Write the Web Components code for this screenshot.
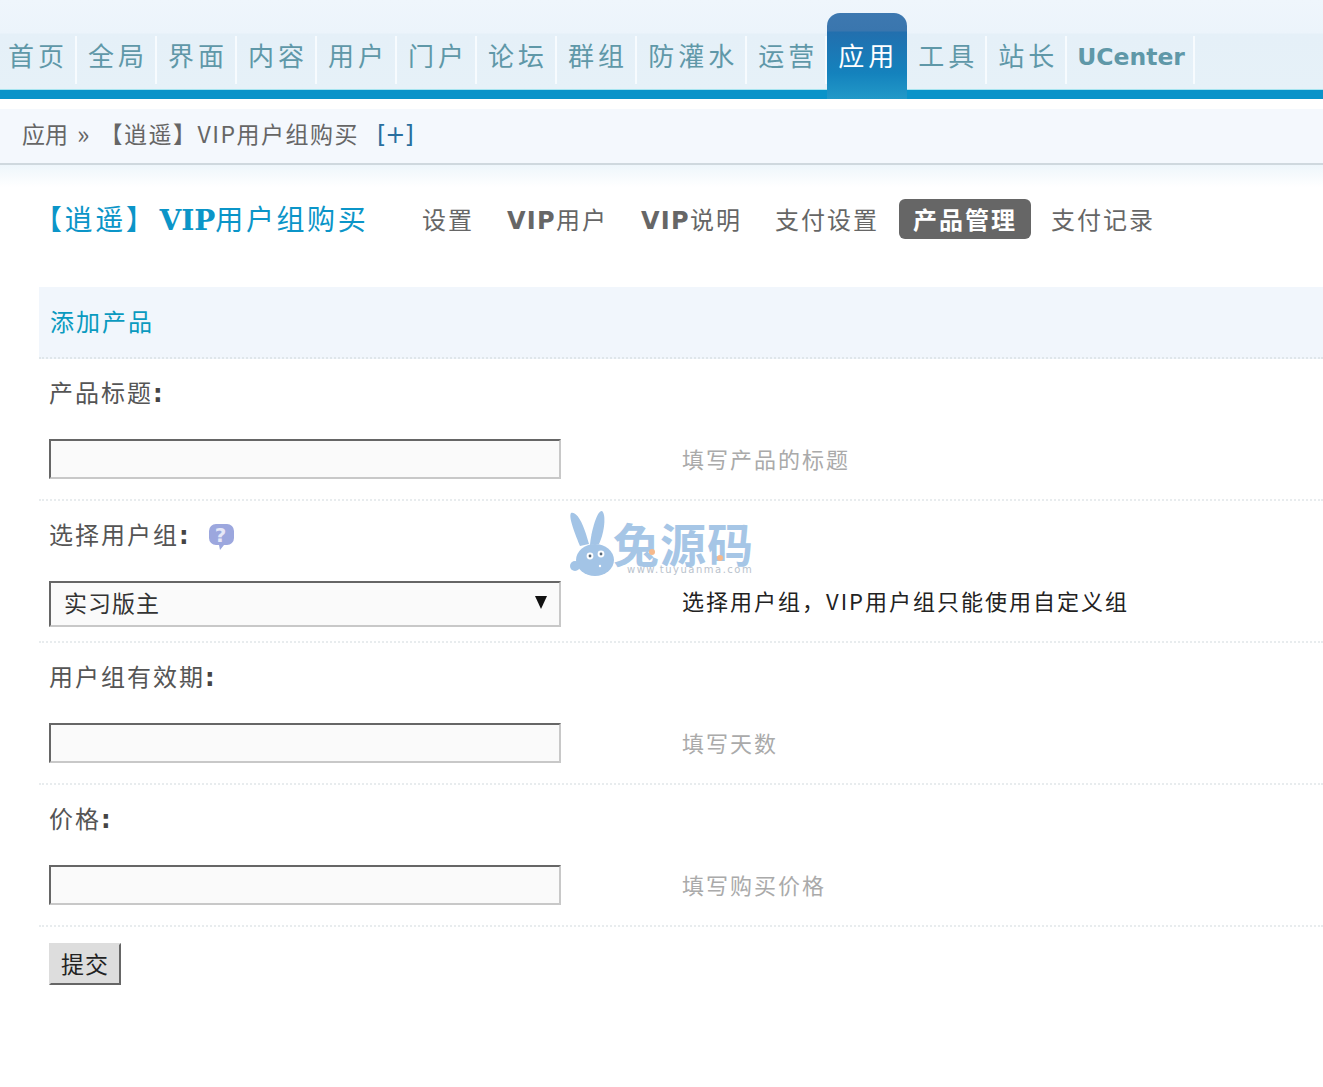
<!DOCTYPE html>
<html lang="zh">
<head>
<meta charset="utf-8">
<title>添加产品</title>
<style>
    html, body { margin: 0; background: #fff; }
    body {
        position: relative;
        height: 1087px;
        overflow: hidden;
        font-family: "Noto Sans CJK SC", "Liberation Sans", sans-serif;
    }
</style>
</head>
<body>
<top-nav>
    <nav-tab>首页</nav-tab><nav-tab>全局</nav-tab><nav-tab>界面</nav-tab><nav-tab>内容</nav-tab>
    <nav-tab>用户</nav-tab><nav-tab>门户</nav-tab><nav-tab>论坛</nav-tab><nav-tab>群组</nav-tab>
    <nav-tab>防灌水</nav-tab><nav-tab>运营</nav-tab><nav-tab active>应用</nav-tab><nav-tab>工具</nav-tab>
    <nav-tab>站长</nav-tab><nav-tab latin>UCenter</nav-tab>
</top-nav>
<crumb-bar></crumb-bar>
<plugin-head>
    <sub-link>设置</sub-link>
    <sub-link><b>VIP</b>用户</sub-link>
    <sub-link><b>VIP</b>说明</sub-link>
    <sub-link>支付设置</sub-link>
    <sub-link active>产品管理</sub-link>
    <sub-link>支付记录</sub-link>
</plugin-head>
<form-panel heading="添加产品">
    <form-row label="产品标题" tip="填写产品的标题"><text-box></text-box></form-row>
    <form-row label="选择用户组" tip="选择用户组，VIP用户组只能使用自定义组" help strong><select-box value="实习版主"></select-box></form-row>
    <form-row label="用户组有效期" tip="填写天数"><text-box></text-box></form-row>
    <form-row label="价格" tip="填写购买价格"><text-box></text-box></form-row>
    <submit-button>提交</submit-button>
</form-panel>
<water-mark></water-mark>

<script>
const CJK = `"Noto Sans CJK SC", "Liberation Sans", sans-serif`;

class TopNav extends HTMLElement {
    constructor() {
        super();
        this.attachShadow({ mode: "open" });
        this.shadowRoot.innerHTML = `
            <style>
                :host {
                    display: block;
                    height: 99px;
                    background: linear-gradient(#eff6fc 0, #ecf4fb 33px, #e5f0f8 34px, #e6f1f8 89px);
                    position: relative;
                }
                .tabs {
                    display: flex;
                    align-items: flex-end;
                    height: 99px;
                    margin-left: -3px;
                }
                .bar {
                    height: 10px;
                    margin-top: -10px;
                    background: #0a93c9;
                    border-top: 1px solid #a5e4f0;
                    box-sizing: border-box;
                }
            </style>
            <div class="tabs"><slot></slot></div>
            <div class="bar"></div>
        `;
    }
}
customElements.define("top-nav", TopNav);

class NavTab extends HTMLElement {
    constructor() {
        super();
        this.attachShadow({ mode: "open" });
        this.shadowRoot.innerHTML = `
            <style>
                :host {
                    display: block;
                    box-sizing: border-box;
                    height: 48px;
                    margin-bottom: 15px;
                    padding-left: 11px;
                    padding-right: 7px;
                    border-right: 2px solid #f7fbfe;
                    color: #5f98a8;
                    font: 26px/38px ${CJK};
                    letter-spacing: 4px;
                    white-space: nowrap;
                    position: relative;
                    z-index: 1;
                }
                :host([latin]) {
                    font: bold 23.5px/43px "DejaVu Sans", sans-serif;
                    letter-spacing: 0;
                    padding-left: 10px;
                    padding-right: 0;
                    width: 128px;
                }
                :host([active]) {
                    height: 86px;
                    margin-bottom: 0;
                    padding-top: 23px;
                    padding-right: 9px;
                    border-right: 0;
                    color: #fff;
                    border-radius: 13px 13px 0 0;
                    background: linear-gradient(#3d78b0 0, #3a76ae 18px, #226fae 19px, #1482bd 60px, #2299c8 86px);
                }
            </style>
            <slot></slot>
        `;
    }
}
customElements.define("nav-tab", NavTab);

class CrumbBar extends HTMLElement {
    constructor() {
        super();
        this.attachShadow({ mode: "open" });
        this.shadowRoot.innerHTML = `
            <style>
                :host {
                    display: block;
                    margin-top: 10px;
                    height: 56px;
                    box-sizing: border-box;
                    background: #f4f8fd;
                    border-bottom: 2px solid #cfd8de;
                }
                .row {
                    display: flex;
                    align-items: center;
                    height: 48px;
                    padding-left: 22px;
                    color: #666;
                    font: 23px/48px ${CJK};
                    white-space: nowrap;
                }
                .sep { margin: 0 11px 0 9px; font-size: 26px; }
                .name { margin-left: -1px; letter-spacing: 1.5px; }
                .more { margin: 4px 0 0 18px; color: #2a6f9f; font: 24px/48px "DejaVu Sans", sans-serif; letter-spacing: -1px; }
            </style>
            <div class="row">
                <span>应用</span><span class="sep">»</span>
                <span class="name">【逍遥】VIP用户组购买</span>
                <span class="more">[+]</span>
            </div>
        `;
    }
}
customElements.define("crumb-bar", CrumbBar);

class PluginHead extends HTMLElement {
    constructor() {
        super();
        this.attachShadow({ mode: "open" });
        this.shadowRoot.innerHTML = `
            <style>
                :host {
                    display: block;
                    height: 122px;
                    box-sizing: border-box;
                    padding-top: 34px;
                    background: linear-gradient(#eef6fb 0, #fff 22px);
                }
                .row { display: flex; align-items: center; height: 40px; white-space: nowrap; }
                h1 {
                    margin: 0 44px 0 34px;
                    width: 330px;
                    box-sizing: border-box;
                    color: #0b95c8;
                    font: 28px/40px ${CJK};
                    letter-spacing: 2.6px;
                }
                h1 b { margin-left: 3px; font: bold 28px/40px "DejaVu Serif", "DejaVu Sans", sans-serif; letter-spacing: 0; }
                .links { display: flex; align-items: center; gap: 5px; }
            </style>
            <div class="row">
                <h1>【逍遥】<b>VIP</b>用户组购买</h1>
                <div class="links"><slot></slot></div>
            </div>
        `;
    }
}
customElements.define("plugin-head", PluginHead);

class SubLink extends HTMLElement {
    constructor() {
        super();
        this.attachShadow({ mode: "open" });
        this.shadowRoot.innerHTML = `
            <style>
                :host {
                    display: block;
                    padding: 0 14px;
                    height: 40px;
                    color: #666;
                    font: 24px/40px ${CJK};
                    letter-spacing: 2px;
                    border-radius: 6px;
                }
                :host([active]) { background: #666; color: #fff; font-weight: bold; margin: 0 1px; }
                ::slotted(b) { font-family: "DejaVu Sans", sans-serif; letter-spacing: 1.3px; }
            </style>
            <slot></slot>
        `;
    }
}
customElements.define("sub-link", SubLink);

class FormPanel extends HTMLElement {
    constructor() {
        super();
        this.attachShadow({ mode: "open" });
        this.shadowRoot.innerHTML = `
            <style>
                :host { display: block; margin-left: 39px; }
                h2 {
                    margin: 0;
                    height: 72px;
                    box-sizing: border-box;
                    padding-left: 11px;
                    color: #0a9abf;
                    font: 24px/68px ${CJK};
                    letter-spacing: 2px;
                    background: #f1f6fc;
                    border-bottom: 2px dotted #dfe6ea;
                }
            </style>
            <h2></h2>
            <slot></slot>
        `;
        this.shadowRoot.querySelector("h2").textContent = this.getAttribute("heading");
    }
}
customElements.define("form-panel", FormPanel);

class FormRow extends HTMLElement {
    constructor() {
        super();
        this.attachShadow({ mode: "open" });
        this.shadowRoot.innerHTML = `
            <style>
                :host {
                    display: grid;
                    grid-template-columns: 522px 1fr;
                    grid-template-rows: 72px 70px;
                    height: 142px;
                    box-sizing: border-box;
                    border-bottom: 2px dotted #e8ecee;
                }
                .label {
                    grid-column: 1 / 3;
                    display: flex;
                    align-items: center;
                    gap: 17px;
                    padding: 0 0 4px 10px;
                    box-sizing: border-box;
                    color: #555;
                    font: 24px/68px ${CJK};
                    letter-spacing: 2px;
                }
                .text b { font-family: "DejaVu Sans", sans-serif; font-weight: bold; color: #444; }
                .field { padding-left: 10px; }
                .tip {
                    padding: 0 0 0 121px;
                    color: #aaa;
                    font: 22px/54px ${CJK};
                    letter-spacing: 2px;
                    white-space: nowrap;
                }
                :host([strong]) .tip { color: #222; }
                svg { display: block; margin-top: 4px; }
                svg text { font: bold 20px "DejaVu Sans", sans-serif; fill: #e6e8f7; }
            </style>
            <div class="label"><span class="text"></span></div>
            <div class="field"><slot></slot></div>
            <div class="tip"></div>
        `;
        const root = this.shadowRoot;
        root.querySelector(".text").innerHTML = this.getAttribute("label") + "<b>:</b>";
        root.querySelector(".tip").textContent = this.getAttribute("tip");
        if (this.hasAttribute("help")) {
            root.querySelector(".label").insertAdjacentHTML("beforeend", `
                <svg width="27" height="28" viewBox="0 0 27 28">
                    <path d="M8 1h11a7 7 0 0 1 7 7v7a7 7 0 0 1-7 7h-3l-4 5-1-5H8a7 7 0 0 1-7-7V8a7 7 0 0 1 7-7z" fill="#9ca7de"/>
                    <text x="13.5" y="19" text-anchor="middle">?</text>
                </svg>`);
        }
    }
}
customElements.define("form-row", FormRow);

class TextBox extends HTMLElement {
    constructor() {
        super();
        this.attachShadow({ mode: "open" });
        this.shadowRoot.innerHTML = `
            <style>
                :host { display: block; }
                input {
                    display: block;
                    width: 512px;
                    height: 40px;
                    margin-top: 8px;
                    box-sizing: border-box;
                    padding: 0 8px;
                    background: #fafafa;
                    border: 2px solid;
                    border-color: #666 #c8c8c8 #c8c8c8 #666;
                    border-radius: 0;
                    outline: 0;
                }
            </style>
            <input type="text">
        `;
    }
}
customElements.define("text-box", TextBox);

class SelectBox extends HTMLElement {
    constructor() {
        super();
        this.attachShadow({ mode: "open" });
        this.shadowRoot.innerHTML = `
            <style>
                :host {
                    display: flex;
                    align-items: center;
                    justify-content: space-between;
                    width: 512px;
                    height: 46px;
                    margin-top: 8px;
                    box-sizing: border-box;
                    padding: 0 12px 4px 13px;
                    background: #fafafa;
                    border: 2px solid;
                    border-color: #666 #c8c8c8 #c8c8c8 #666;
                    color: #333;
                    font: 23px/38px ${CJK};
                    letter-spacing: 1px;
                }
                svg { display: block; }
            </style>
            <span class="value"></span>
            <svg width="12" height="13" viewBox="0 0 12 13"><path d="M0 0h12L6 13z" fill="#111"/></svg>
        `;
        this.shadowRoot.querySelector(".value").textContent = this.getAttribute("value");
    }
}
customElements.define("select-box", SelectBox);

class SubmitButton extends HTMLElement {
    constructor() {
        super();
        this.attachShadow({ mode: "open" });
        this.shadowRoot.innerHTML = `
            <style>
                :host {
                    display: block;
                    width: 72px;
                    height: 42px;
                    margin: 16px 0 0 10px;
                    box-sizing: border-box;
                    background: #ddd;
                    border: 2px solid;
                    border-color: #ddd #666 #666 #ddd;
                    color: #222;
                    text-align: center;
                    font: 23px/36px ${CJK};
                    letter-spacing: 1px;
                }
            </style>
            <slot></slot>
        `;
    }
}
customElements.define("submit-button", SubmitButton);

class WaterMark extends HTMLElement {
    constructor() {
        super();
        this.attachShadow({ mode: "open" });
        this.shadowRoot.innerHTML = `
            <style>
                :host {
                    position: absolute;
                    left: 568px;
                    top: 510px;
                    width: 190px;
                    height: 70px;
                    pointer-events: none;
                }
                svg { position: absolute; left: 0; top: 0; }
                .name {
                    position: absolute;
                    left: 45px;
                    top: 10px;
                    color: #a6c6e6;
                    font: bold 46px/44px ${CJK};
                    letter-spacing: 1px;
                    white-space: nowrap;
                }
                .url {
                    position: absolute;
                    left: 59px;
                    top: 54px;
                    color: #b9c2cc;
                    font: 10px/12px "DejaVu Sans", sans-serif;
                    letter-spacing: 1.5px;
                    white-space: nowrap;
                }
            </style>
            <svg width="50" height="68" viewBox="0 0 50 68">
                <g fill="#a3c4e6">
                    <path d="M3 3c5-2 11 8 15 21l3 10-9 2C8 26 0 7 3 3z"/>
                    <path d="M34 1c4 3 3 20-3 33l-9 1c1-13 7-35 12-34z"/>
                    <ellipse cx="27" cy="50" rx="19" ry="16"/>
                    <circle cx="7" cy="56" r="5"/>
                </g>
                <circle cx="22" cy="46" r="3.4" fill="#fff"/><circle cx="33" cy="44" r="3.4" fill="#fff"/>
                <circle cx="22" cy="46" r="1.4" fill="#567"/><circle cx="33" cy="44" r="1.4" fill="#567"/>
                <circle cx="32" cy="56" r="1.2" fill="#fff"/>
            </svg>
            <div class="name">兔源码</div>
            <svg width="190" height="70" viewBox="0 0 190 70">
                <circle cx="84" cy="42" r="3" fill="#f6b98c"/>
                <circle cx="152" cy="48" r="3" fill="#f6b98c"/>
            </svg>
            <div class="url">www.tuyuanma.com</div>
        `;
    }
}
customElements.define("water-mark", WaterMark);
</script>
</body>
</html>
